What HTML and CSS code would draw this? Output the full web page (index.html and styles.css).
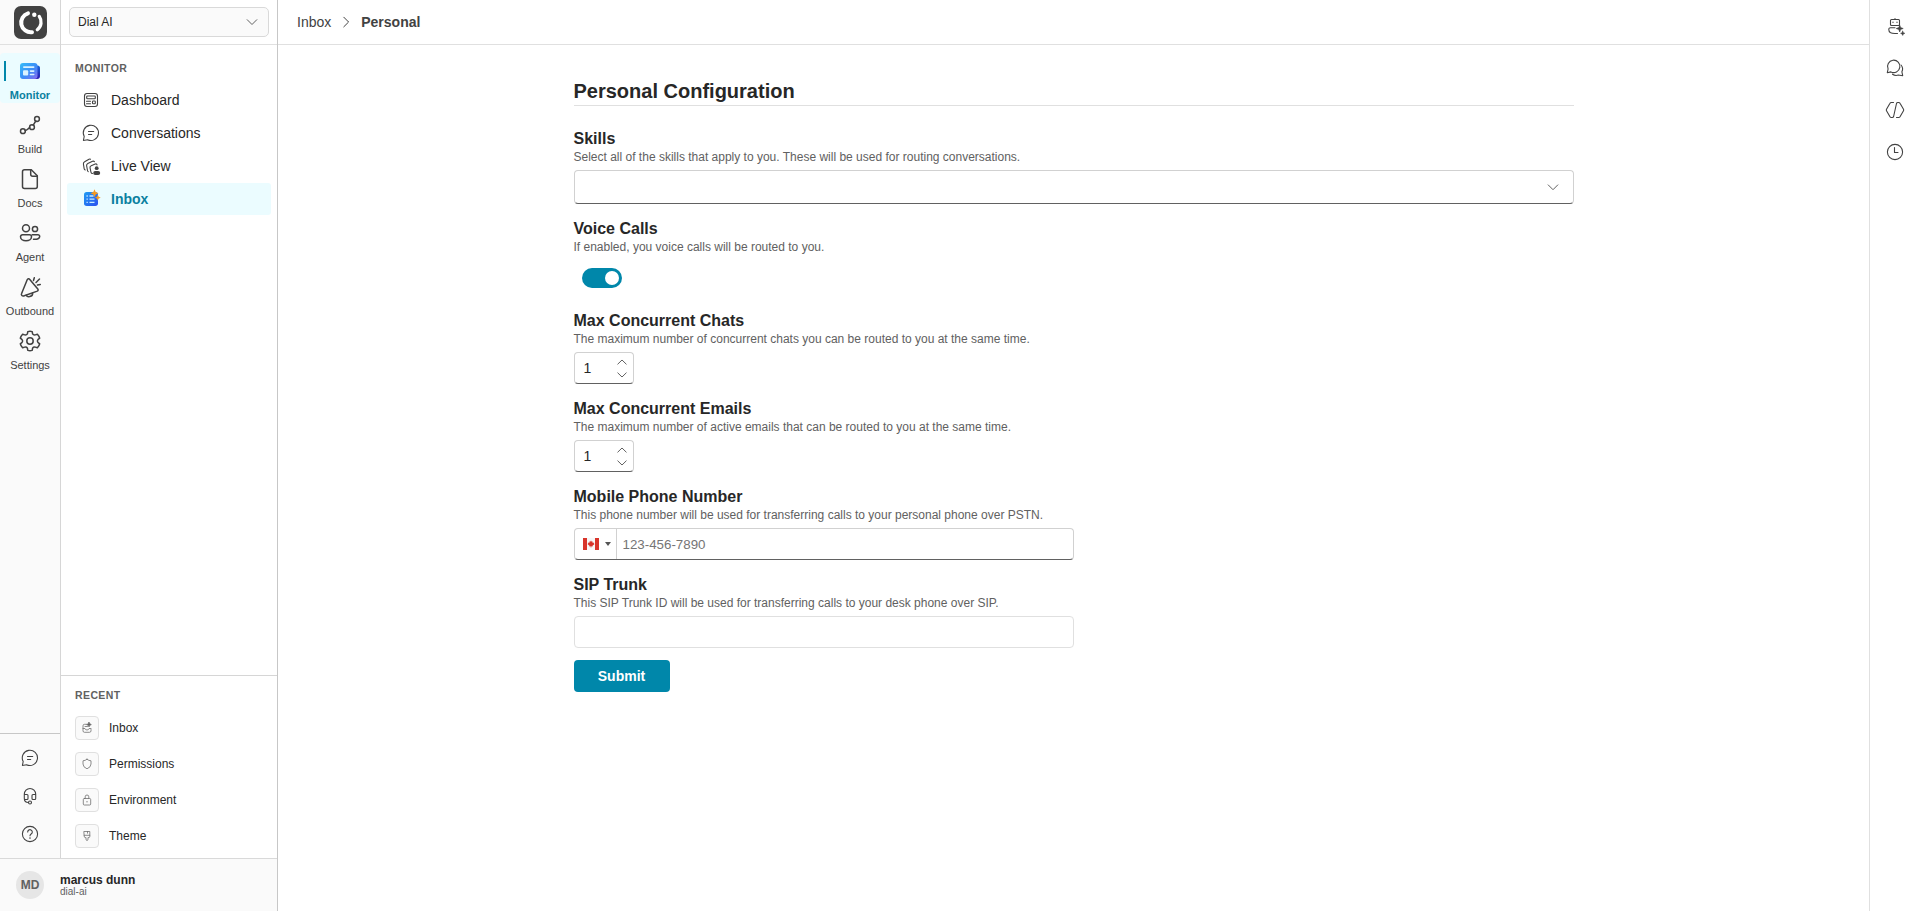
FILE: index.html
```html
<!DOCTYPE html>
<html lang="en">
<head>
    <meta charset="UTF-8">
    <meta name="viewport" content="width=device-width, initial-scale=1.0">
    <title>Personal Configuration</title>
    <link rel="stylesheet" href="styles.css">
</head>
<body>
    <div class="sidebar">
        <div class="sidebar-main">
            <nav class="rail">
                <div class="logo">
                    <svg width="33" height="33" viewBox="0 0 33 33">
                        <rect width="33" height="33" rx="7" fill="#424242"/>
                        <g fill="none" stroke="#fff" stroke-linecap="round">
                            <path d="M14 7.300A9.700 9.700 0 0 0 18 26.200" stroke-width="4"/>
                            <path d="M25.300 10.400a9.800 9.800 0 0 1-2 13.400" stroke-width="3.300"/>
                        </g>
                        <circle cx="20.300" cy="8.700" r="2.200" fill="#fff"/>
                    </svg>
                </div>
                <div class="rail-items">
                    <a class="rail-item active">
                        <svg width="24" height="24" viewBox="0 0 24 24">
                            <defs>
                                <linearGradient id="news" x1="0" y1="0" x2="1" y2="1">
                                    <stop offset="0" stop-color="#35bdf8"/>
                                    <stop offset=".55" stop-color="#3b8cf7"/>
                                    <stop offset="1" stop-color="#8b6cf0"/>
                                </linearGradient>
                                <linearGradient id="newsBack" x1="0" y1="0" x2="0" y2="1">
                                    <stop offset="0" stop-color="#1567d8"/>
                                    <stop offset="1" stop-color="#2a18b0"/>
                                </linearGradient>
                            </defs>
                            <path d="M17 6.500h2.500a2.500 2.500 0 0 1 2.500 2.500v8a3 3 0 0 1-3 3h-3z" fill="url(#newsBack)"/>
                            <rect x="2" y="4" width="17.500" height="16" rx="3" fill="url(#news)"/>
                            <rect x="5" y="7.200" width="11.500" height="1.800" rx=".9" fill="#d9f2ff"/>
                            <rect x="5" y="11.300" width="5.200" height="5.200" rx="1" fill="#d9f2ff"/>
                            <rect x="11.700" y="11.300" width="4.800" height="1.600" rx=".8" fill="#d9f2ff"/>
                            <rect x="11.700" y="14.700" width="4.800" height="1.600" rx=".8" fill="#d9f2ff"/>
                        </svg>
                        <span>Monitor</span>
                    </a>
                    <a class="rail-item">
                        <svg class="icon bold" width="24" height="24" viewBox="0 0 24 24">
                            <circle cx="4.900" cy="18.200" r="2.400"/>
                            <circle cx="14" cy="14.200" r="2.400"/>
                            <circle cx="19" cy="6" r="2.400"/>
                            <path d="M7.200 17.500c2 0 2.500-2 4.600-2.700M15.200 12.200l2.600-4.200"/>
                        </svg>
                        <span>Build</span>
                    </a>
                    <a class="rail-item">
                        <svg class="icon bold" width="24" height="24" viewBox="0 0 24 24">
                            <path d="M6.500 2.700h6.800l6 6v10.800a2 2 0 0 1-2 2H6.500a2 2 0 0 1-2-2V4.700a2 2 0 0 1 2-2z"/>
                            <path d="M12.700 2.700v4.600a2 2 0 0 0 2 2h4.600"/>
                        </svg>
                        <span>Docs</span>
                    </a>
                    <a class="rail-item">
                        <svg class="icon bold" width="24" height="24" viewBox="0 0 24 24">
                            <circle cx="8" cy="7.200" r="3.500"/>
                            <circle cx="17" cy="8" r="2.600"/>
                            <path d="M4.500 13.800h7a2 2 0 0 1 2 2c0 2.300-2.300 4-5.500 4s-5.500-1.700-5.500-4a2 2 0 0 1 2-2z"/>
                            <path d="M14.200 13.800H20a1.700 1.700 0 0 1 1.700 1.700c0 1.800-2.300 3.200-6.200 2.800"/>
                        </svg>
                        <span>Agent</span>
                    </a>
                    <a class="rail-item">
                        <svg class="icon bold" width="24" height="24" viewBox="0 0 24 24">
                            <path d="M11.800 4.400l8 9.700c.6.700.3 1.600-.5 2L5.600 21c-1.200.4-2.700-1-2.100-2.300l5.700-13.900c.5-1.100 1.800-1.300 2.600-.4z"/>
                            <path d="M8.300 20.300c.8 2.200 6.700 2 6.300-2.300M15.500 5.500l.8-2.800M18 7.500l3.500-3.500M19.500 10l2.800-.6"/>
                        </svg>
                        <span>Outbound</span>
                    </a>
                    <a class="rail-item">
                        <svg class="icon bold" width="24" height="24" viewBox="0 0 24 24">
                            <circle cx="12" cy="12" r="3.200"/>
                            <path d="M9.800 2.600q2.200-.7 4.400 0l.4 2.300q.9 1.500 2.700 1l2.100-.7q1.700 1.800 2.300 4l-1.800 1.500q-1.100 1.300 0 2.600l1.800 1.500q-.6 2.200-2.300 4l-2.100-.7q-1.800-.5-2.700 1l-.4 2.300q-2.200.7-4.400 0l-.4-2.300q-.9-1.500-2.700-1l-2.100.7q-1.700-1.800-2.300-4l1.800-1.500q1.100-1.300 0-2.600L2.300 9.200q.6-2.200 2.300-4l2.100.7q1.800.5 2.700-1z"/>
                        </svg>
                        <span>Settings</span>
                    </a>
                </div>
                <div class="rail-bottom">
                    <svg class="icon" width="20" height="20" viewBox="0 0 20 20">
                        <path d="M2.400 17.500l.8-4A7.600 7.600 0 1 1 6.500 16.700zM7.500 8.500h5.200M7.500 11.500h3.200"/>
                    </svg>
                    <svg class="icon" width="20" height="20" viewBox="0 0 20 20">
                        <path d="M4.300 12V8.200a5.700 5.700 0 0 1 11.400 0V12M4.300 8.500H7a1 1 0 0 1 1 1v3a1 1 0 0 1-1 1H5.300a1 1 0 0 1-1-1zM15.700 8.500H13a1 1 0 0 0-1 1v3a1 1 0 0 0 1 1h1.700a1 1 0 0 0 1-1zM4.300 12.500c0 3 1.700 4 4.200 4"/>
                        <circle cx="10" cy="16.500" r="1.500"/>
                    </svg>
                    <svg class="icon" width="20" height="20" viewBox="0 0 20 20">
                        <circle cx="10" cy="10" r="7.600"/>
                        <path d="M7.700 8a2.300 2.300 0 1 1 3.700 1.800C10.500 10.500 10 10.900 10 11.800"/>
                        <circle cx="10" cy="14" r=".3"/>
                    </svg>
                </div>
            </nav>

            <aside class="panel">
                <div class="workspace">
                    <div class="workspace-select">
                        <span>Dial AI</span>
                        <svg class="chevron" width="12" height="12" viewBox="0 0 12 12"><path d="M1.200 3.700L6 8.500l4.800-4.800"/></svg>
                    </div>
                </div>
                <div class="menu">
                    <h4 class="section-title">MONITOR</h4>
                    <a class="menu-item">
                        <svg class="icon" width="20" height="20" viewBox="0 0 20 20">
                            <rect x="3.500" y="3.500" width="13" height="13" rx="2.500"/>
                            <rect x="5.700" y="6" width="8.600" height="2.700" rx=".8"/>
                            <rect x="11.500" y="11" width="2.800" height="2.800" rx=".7"/>
                            <path d="M5.500 11.200h4M5.500 13.700h4"/>
                        </svg>
                        <span>Dashboard</span>
                    </a>
                    <a class="menu-item">
                        <svg class="icon" width="20" height="20" viewBox="0 0 20 20">
                            <path d="M2.400 17.500l.8-4A7.600 7.600 0 1 1 6.500 16.700zM7.500 8.500h5.200M7.500 11.500h3.200"/>
                        </svg>
                        <span>Conversations</span>
                    </a>
                    <a class="menu-item">
                        <svg class="icon" width="20" height="20" viewBox="0 0 20 20">
                            <path d="M4.300 14q-.9-.2-1.100-1.200L2.400 8Q2.200 6.400 3.600 5.700L8 3.200q.8-.4 1.500 0M7.300 15.700q-.6-.2-.8-1.200L5.600 9.700q-.2-1.500 1.200-2.200l4.700-2.200q1.200-.5 1.900.3M11.500 17.500q-1.200 0-1.500-1.200l-1-4.600q-.2-1.500 1.200-2l4-1.700q1.500-.5 1.800.9"/>
                            <circle cx="15.700" cy="12.200" r="1.900" fill="#424242" stroke="none"/>
                            <rect x="12.200" y="15" width="7" height="4" rx="2" fill="#424242" stroke="none"/>
                        </svg>
                        <span>Live View</span>
                    </a>
                    <a class="menu-item active">
                        <svg width="20" height="20" viewBox="0 0 20 20">
                            <defs>
                                <linearGradient id="list" x1="0" y1="0" x2="1" y2="1">
                                    <stop offset="0" stop-color="#1f9cf2"/>
                                    <stop offset="1" stop-color="#2b50f0"/>
                                </linearGradient>
                            </defs>
                            <rect x="3" y="3" width="14" height="14" rx="2.700" fill="url(#list)"/>
                            <path d="M5.500 7h1.300M8.500 7h4M5.500 10.200h1.300M8.500 10.200h5M5.500 13.400h1.300M8.500 13.400h5" stroke="#c9ecff" stroke-width="1.300"/>
                            <path d="M13.500 .2l1.200 2.800 2.800 1.200-2.800 1.200-1.200 2.800-1.200-2.800-2.800-1.200 2.800-1.200zM16.800 5.800l.9 2 2 .9-2 .9-.9 2-.9-2-2-.9 2-.9z" fill="#f59a23"/>
                        </svg>
                        <span>Inbox</span>
                    </a>
                </div>
                <div class="recent">
                    <h4 class="section-title">RECENT</h4>
                    <a class="recent-item">
                        <span class="recent-icon">
                            <svg class="icon" width="12" height="12" viewBox="0 0 12 12">
                                <path d="M6 2.300H3.500A1.500 1.500 0 0 0 2 3.800v5a1.500 1.500 0 0 0 1.500 1.500h5A1.500 1.500 0 0 0 10 8.800V7.500M2 6.500h2q.3 1.500 2 1.500t2-1.500h2M4 4.500h2.500"/>
                                <path d="M8 .3l.8 1.500 1.500.8-1.500.7L8 4.900l-.8-1.600-1.500-.7 1.500-.8z" fill="#616161"/>
                            </svg>
                        </span>
                        <span>Inbox</span>
                    </a>
                    <a class="recent-item">
                        <span class="recent-icon">
                            <svg class="icon" width="12" height="12" viewBox="0 0 12 12">
                                <path d="M6 1.300Q7.800 2.700 10 2.800V6q0 3.200-4 4.800Q2 9.200 2 6V2.800Q4.200 2.700 6 1.300z"/>
                            </svg>
                        </span>
                        <span>Permissions</span>
                    </a>
                    <a class="recent-item">
                        <span class="recent-icon">
                            <svg class="icon" width="12" height="12" viewBox="0 0 12 12">
                                <rect x="2.300" y="4.500" width="7.400" height="6.500" rx="1"/>
                                <path d="M4.200 4.500V2.800a1.800 1.800 0 0 1 3.600 0v1.700M5.600 7.800h.8"/>
                            </svg>
                        </span>
                        <span>Environment</span>
                    </a>
                    <a class="recent-item">
                        <span class="recent-icon">
                            <svg class="icon" width="12" height="12" viewBox="0 0 12 12">
                                <path d="M3.200 1.500h5.600v5a1 1 0 0 1-1 1H7v2.300q-1 1.500-2 0V7.500h-.8a1 1 0 0 1-1-1zM3.200 5.300h5.600M6.500 1.500v1.700"/>
                            </svg>
                        </span>
                        <span>Theme</span>
                    </a>
                </div>
            </aside>
        </div>
        <div class="user">
            <div class="avatar">MD</div>
            <div>
                <div class="user-name">marcus dunn</div>
                <div class="user-org">dial-ai</div>
            </div>
        </div>
    </div>

    <div class="content">
        <header class="breadcrumb">
            <span>Inbox</span>
            <svg class="chevron" width="12" height="12" viewBox="0 0 12 12"><path d="M3.800 1.200L8.600 6l-4.800 4.800"/></svg>
            <b>Personal</b>
        </header>
        <main class="config">
            <h1>Personal Configuration</h1>

            <section class="field">
                <h2>Skills</h2>
                <p>Select all of the skills that apply to you. These will be used for routing conversations.</p>
                <div class="box skills-select">
                    <svg class="chevron" width="12" height="12" viewBox="0 0 12 12"><path d="M1.200 3.900L6 8.700l4.800-4.800"/></svg>
                </div>
            </section>

            <section class="field">
                <h2>Voice Calls</h2>
                <p>If enabled, you voice calls will be routed to you.</p>
                <div class="toggle-wrap">
                    <div class="toggle"><span></span></div>
                </div>
            </section>

            <section class="field">
                <h2>Max Concurrent Chats</h2>
                <p>The maximum number of concurrent chats you can be routed to you at the same time.</p>
                <div class="box spinner">
                    <span>1</span>
                    <div class="spinner-buttons">
                        <svg class="chevron" width="10" height="6" viewBox="0 0 10 6"><path d="M.8 5.100L5 1l4.200 4.100"/></svg>
                        <svg class="chevron" width="10" height="6" viewBox="0 0 10 6"><path d="M.8.900L5 5 9.200.900"/></svg>
                    </div>
                </div>
            </section>

            <section class="field">
                <h2>Max Concurrent Emails</h2>
                <p>The maximum number of active emails that can be routed to you at the same time.</p>
                <div class="box spinner">
                    <span>1</span>
                    <div class="spinner-buttons">
                        <svg class="chevron" width="10" height="6" viewBox="0 0 10 6"><path d="M.8 5.100L5 1l4.200 4.100"/></svg>
                        <svg class="chevron" width="10" height="6" viewBox="0 0 10 6"><path d="M.8.900L5 5 9.200.900"/></svg>
                    </div>
                </div>
            </section>

            <section class="field">
                <h2>Mobile Phone Number</h2>
                <p>This phone number will be used for transferring calls to your personal phone over PSTN.</p>
                <div class="box phone">
                    <div class="country">
                        <svg width="16" height="12" viewBox="0 0 16 12">
                            <rect width="16" height="12" fill="#f7f7f7"/>
                            <path d="M0 0h4v12H0zM12 0h4v12h-4z" fill="#d8342a"/>
                            <path d="M8 2.500l.8 1.300.9-.4-.1 1.500 1.500-.4-.3 1 .8.400L9.500 7.800l.1.700-1.300-.2v1.200h-.6V8.300l-1.300.2.1-.7-2.100-1.900.8-.4-.3-1 1.500.4-.1-1.500.9.400z" fill="#d8342a"/>
                        </svg>
                        <span class="caret"></span>
                    </div>
                    <input type="tel" placeholder="123-456-7890">
                </div>
            </section>

            <section class="field">
                <h2>SIP Trunk</h2>
                <p>This SIP Trunk ID will be used for transferring calls to your desk phone over SIP.</p>
                <input class="sip" type="text">
            </section>

            <button class="submit">Submit</button>
        </main>
    </div>

    <div class="tools">
        <svg class="icon" width="20" height="20" viewBox="0 0 20 20">
            <rect x="5.500" y="3.500" width="9" height="6" rx="1"/>
            <path d="M10 3.500V2.500M8 6v.5M12 6v.5M10 11.700H5.500A1.700 1.700 0 0 0 3.800 13.400c0 2.400 1.700 4.100 6.200 4.100h2.500"/>
            <path d="M14.700 9l.9 2.600 2.600.9-2.600.9-.9 2.600-.9-2.600-2.600-.9 2.600-.9zM17.700 15.200l.6 1.500 1.500.6-1.500.6-.6 1.500-.6-1.500-1.500-.6 1.500-.6z" fill="#424242" stroke="#424242" stroke-width=".6"/>
        </svg>
        <svg class="icon" width="20" height="20" viewBox="0 0 20 20">
            <path d="M2.300 14.700l.8-3.700A6.200 6.200 0 1 1 5.900 13.900zM7.500 16.200q2.700 2 5.800.8l4.400.7-.8-3.900q1.800-3.800-.9-6.800"/>
        </svg>
        <svg class="icon" width="20" height="20" viewBox="0 0 20 20">
            <path d="M8.500 2.500H6.300a1.500 1.500 0 0 0-1.300.8L1.500 9.200a1.500 1.500 0 0 0 0 1.500L5 16.700a1.500 1.500 0 0 0 1.300.8h1q1 0 1.300-1l2.900-13q.3-1 1.300-1h.9a1.500 1.500 0 0 1 1.300.8l3.500 5.900a1.500 1.500 0 0 1 0 1.500L15 16.700a1.500 1.500 0 0 1-1.300.8h-2.200"/>
        </svg>
        <svg class="icon" width="20" height="20" viewBox="0 0 20 20">
            <circle cx="10" cy="10" r="7.600"/>
            <path d="M9.500 5.500v5H13"/>
        </svg>
    </div>
</body>
</html>
```
FILE: styles.css
```css
* {
    box-sizing: border-box;
}
body {
    margin: 0;
    height: 100vh;
    display: flex;
    overflow: hidden;
    font-family: "Liberation Sans", Arial, sans-serif;
    font-size: 14px;
    color: #272727;
    background-color: #fff;
}
h1, h2, h4, p {
    margin: 0;
}
svg {
    display: block;
    flex-shrink: 0;
}
.icon {
    fill: none;
    stroke: #424242;
    stroke-width: 1.1;
    stroke-linecap: round;
    stroke-linejoin: round;
}
.icon.bold {
    stroke-width: 1.5;
}
.chevron {
    fill: none;
    stroke: #616161;
    stroke-width: 1;
    stroke-linecap: round;
}

/* left side */
.sidebar {
    width: 278px;
    flex-shrink: 0;
    display: flex;
    flex-direction: column;
    border-right: 1px solid #c7c7c7;
}
.sidebar-main {
    flex: 1;
    display: flex;
}
.rail {
    width: 61px;
    display: flex;
    flex-direction: column;
    background-color: #fafafa;
    border-right: 1px solid #d6d6d6;
}
.logo {
    height: 45px;
    padding: 6px 0 0 14px;
    border-bottom: 1px solid #e0e0e0;
}
.rail-items {
    flex: 1;
    padding-top: 8px;
}
.rail-item {
    position: relative;
    height: 50px;
    margin-bottom: 4px;
    padding-top: 6px;
    display: flex;
    flex-direction: column;
    align-items: center;
    gap: 5px;
    font-size: 11px;
    line-height: 14px;
    color: #424242;
}
.rail-item.active {
    background-color: #ebfcff;
    border-radius: 4px;
    color: #0a80a0;
    font-weight: bold;
}
.rail-item.active::before {
    content: "";
    position: absolute;
    left: 4px;
    top: 8px;
    width: 2px;
    height: 20px;
    background-color: #0087aa;
}
.rail-bottom {
    height: 125px;
    padding-top: 14px;
    display: flex;
    flex-direction: column;
    align-items: center;
    gap: 18px;
    border-top: 1px solid #c7c7c7;
}
.panel {
    flex: 1;
    display: flex;
    flex-direction: column;
}
.workspace {
    height: 45px;
    padding: 7px 8px 0;
    border-bottom: 1px solid #e0e0e0;
}
.workspace-select {
    height: 30px;
    padding: 0 10px 0 8px;
    display: flex;
    align-items: center;
    justify-content: space-between;
    font-size: 12px;
    background-color: #fafafa;
    border: 1px solid #d9d9d9;
    border-radius: 5px;
}
.menu {
    flex: 1;
    padding: 16px 6px 0;
}
.section-title {
    height: 15px;
    padding-left: 8px;
    font-size: 10.5px;
    line-height: 15px;
    letter-spacing: 0.4px;
    color: #616161;
}
.menu .section-title {
    margin-bottom: 8px;
}
.menu-item {
    height: 32px;
    margin-bottom: 1px;
    padding-left: 14px;
    display: flex;
    align-items: center;
    gap: 10px;
}
.menu-item.active {
    background-color: #ebfcff;
    border-radius: 3px;
    color: #0a80a0;
    font-weight: bold;
}
.recent {
    height: 183px;
    padding: 12px 6px 0;
    border-top: 1px solid #d6d6d6;
}
.recent .section-title {
    margin-bottom: 13px;
}
.recent-item {
    height: 24px;
    margin: 0 0 12px 8px;
    display: flex;
    align-items: center;
    gap: 10px;
    font-size: 12px;
}
.recent-icon {
    width: 24px;
    height: 24px;
    display: flex;
    align-items: center;
    justify-content: center;
    background-color: #fafafa;
    border: 1px solid #e0e0e0;
    border-radius: 4px;
}
.recent-icon .icon {
    stroke: #707070;
    stroke-width: 0.8;
}
.user {
    height: 53px;
    padding-left: 16px;
    display: flex;
    align-items: center;
    gap: 16px;
    background-color: #fafafa;
    border-top: 1px solid #d9d9d9;
}
.avatar {
    width: 28px;
    height: 28px;
    border-radius: 50%;
    background-color: #e6e6e6;
    color: #616161;
    font-size: 12px;
    font-weight: bold;
    line-height: 28px;
    text-align: center;
}
.user-name {
    font-size: 12px;
    font-weight: bold;
    line-height: 14px;
}
.user-org {
    margin: -1px 0 1px;
    font-size: 10px;
    line-height: 11px;
    color: #616161;
}

/* main area */
.content {
    flex: 1;
}
.breadcrumb {
    height: 45px;
    padding-left: 19px;
    display: flex;
    align-items: center;
    gap: 9px;
    color: #424242;
    border-bottom: 1px solid #e0e0e0;
}
.breadcrumb .chevron {
    stroke: #424242;
}
.config {
    width: 1000px;
    margin: 0 auto;
    padding-top: 32px;
}
.config h1 {
    height: 29px;
    margin-bottom: 23px;
    font-size: 20px;
    line-height: 28px;
    border-bottom: 1px solid #e0e0e0;
}
.field {
    margin-bottom: 15px;
}
.field h2 {
    font-size: 16px;
    line-height: 20px;
}
.field p {
    margin-bottom: 5px;
    font-size: 12px;
    line-height: 16px;
    color: #616161;
}
.box {
    display: flex;
    align-items: center;
    height: 32px;
    border: 1px solid #d1d1d1;
    border-bottom-color: #616161;
    border-radius: 4px;
}
.skills-select {
    height: 34px;
    padding-right: 14px;
    justify-content: flex-end;
}
.toggle-wrap {
    padding: 8px;
}
.toggle {
    width: 40px;
    height: 20px;
    padding: 0 3px;
    display: flex;
    align-items: center;
    justify-content: flex-end;
    background-color: #0087aa;
    border-radius: 10px;
}
.toggle span {
    width: 14px;
    height: 14px;
    background-color: #fff;
    border-radius: 50%;
}
.spinner {
    width: 60px;
    padding: 0 6px 0 9px;
    justify-content: space-between;
}
.spinner-buttons {
    display: flex;
    flex-direction: column;
    gap: 7px;
}
.phone {
    width: 500px;
}
.country {
    width: 42px;
    height: 30px;
    padding-left: 8px;
    display: flex;
    align-items: center;
    gap: 6px;
    border-right: 1px solid #d1d1d1;
}
.caret {
    border-left: 3px solid transparent;
    border-right: 3px solid transparent;
    border-top: 4px solid #555;
}
.phone input {
    flex: 1;
    padding: 0 6px;
    border: none;
    background: none;
    font-family: inherit;
    font-size: 13.33px;
}
.phone input::placeholder {
    color: #757575;
}
.sip {
    display: block;
    width: 500px;
    height: 32px;
    border: 1px solid #e0e0e0;
    border-radius: 4px;
}
.submit {
    display: block;
    width: 96px;
    height: 32px;
    margin-top: -3px;
    border: none;
    border-radius: 4px;
    background-color: #0087aa;
    color: #fff;
    font-family: inherit;
    font-size: 14px;
    font-weight: bold;
}

/* right toolbar */
.tools {
    width: 51px;
    padding-top: 16px;
    display: flex;
    flex-direction: column;
    align-items: center;
    gap: 22px;
    border-left: 1px solid #e0e0e0;
}
```
